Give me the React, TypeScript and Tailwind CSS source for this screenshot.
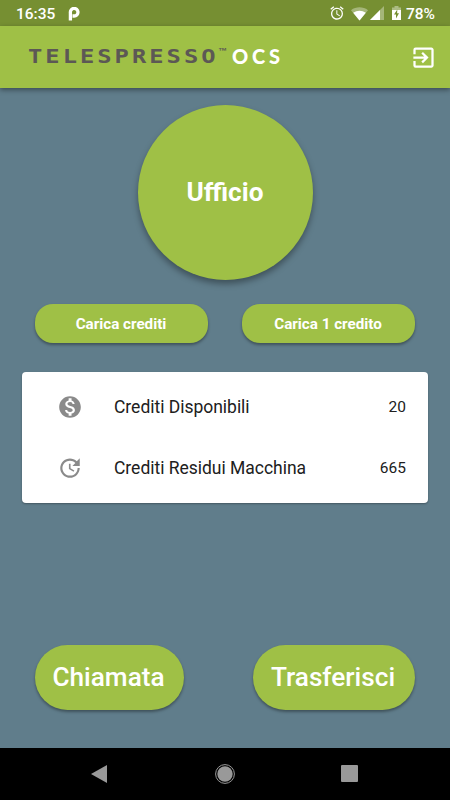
import type { ReactNode } from "react";
import { MdAlarm, MdExitToApp, MdMonetizationOn, MdUpdate } from "react-icons/md";

function StatusBar() {
  return (
    <div className="flex h-[26px] shrink-0 items-center bg-[#768f32] pl-4 pr-[15px] text-[15.5px] font-medium text-white">
      <span className="mt-[3px] w-[39px] whitespace-nowrap leading-none">16:35</span>
      <svg className="ml-[13px] mt-px" width="12" height="14" viewBox="0 0 12 14">
        <path
          d="M2.4 13.5V5.8A3.8 3.8 0 1 1 6.2 9H4.5"
          fill="none"
          stroke="#fff"
          strokeWidth="3.3"
        />
      </svg>
      <div className="ml-auto flex items-center">
        <MdAlarm size={16} />
        <svg className="ml-[6px] mt-px" width="17" height="14" viewBox="0 0 17 14">
          <path d="M0 3.2C5 -.6 12 -.6 17 3.2L8.5 13.5Z" fill="#fff" opacity=".35" />
          <path d="M2.2 5.8C6 3 11 3 14.8 5.8L8.5 13.5Z" fill="#fff" />
        </svg>
        <svg className="ml-[2px]" width="14" height="14" viewBox="0 0 14 14">
          <path d="M0 14L14 0V14Z" fill="#fff" opacity=".35" />
          <path d="M0 14L10 4V14Z" fill="#fff" />
        </svg>
        <svg className="ml-[8px]" width="9" height="14" viewBox="0 0 9 14">
          <path d="M0 1.5H2.5V0H6.5V1.5H9V4H0Z" fill="#fff" opacity=".4" />
          <path d="M0 4H9V14H0Z" fill="#fff" />
          <path d="M5.3 3.5L2 8.5H4V12.5L7 7.3H5.1Z" fill="#768f32" />
        </svg>
        <span className="ml-[5px] mt-[3px] w-[29px] whitespace-nowrap leading-none">78%</span>
      </div>
    </div>
  );
}

function Header() {
  return (
    <header className="z-10 flex h-[62px] shrink-0 items-center justify-between bg-[#9fc046] pl-[28px] pr-[13px] text-white shadow-[0_2px_5px_rgba(0,0,0,0.4)]">
      <div className="-mt-[2px] flex items-center whitespace-nowrap leading-none">
        <div className="w-[190px]">
          <span className="flex w-[152px] origin-left scale-x-[1.25] font-['DejaVu_Sans_Mono',monospace] text-[19px] font-bold tracking-[2.42px] text-[#5c5855]">
            TELESPRESS<span className="tracking-normal">O</span>
          </span>
        </div>
        <span className="-mt-[9px] w-[14px] font-['Liberation_Sans',sans-serif] text-[9px] font-bold text-[#5c5855]">™</span>
        <span className="font-['Lato',sans-serif] text-[20px] font-black tracking-[3.8px]">OCS</span>
      </div>
      <MdExitToApp size={27} />
    </header>
  );
}

function CreditRow({ icon, label, value }: { icon: ReactNode; label: string; value: string }) {
  return (
    <div className="flex h-[61px] items-center pl-[35px] pr-[22px]">
      <span className="-mt-[2px] w-[57px] text-[#8a8a8a]">{icon}</span>
      <span className="grow text-[17.5px] tracking-[-0.02px] text-[#202020]">{label}</span>
      <span className="text-[15.5px] text-[#202020]">{value}</span>
    </div>
  );
}

export default function App() {
  return (
    <div className="flex h-[800px] w-[450px] flex-col overflow-hidden bg-[#607d8b] font-['Roboto',sans-serif]">
      <StatusBar />
      <Header />
      <main className="flex grow flex-col">
        <button className="mx-auto mt-[17px] size-[175px] rounded-full bg-[#9fc046] text-[26.2px] font-bold text-white shadow-[0_4px_6px_rgba(0,0,0,0.35)]">
          Ufficio
        </button>
        <div className="mx-[35px] mt-[24px] flex justify-between text-[15.2px] font-bold text-white">
          <button className="h-[39px] w-[173px] rounded-[18px] bg-[#9fc046] pr-px pt-[2px] shadow-[0_2px_3px_rgba(0,0,0,0.35)]">
            Carica crediti
          </button>
          <button className="h-[39px] w-[173px] rounded-[18px] bg-[#9fc046] pr-px pt-[2px] shadow-[0_2px_3px_rgba(0,0,0,0.35)]">
            Carica 1 credito
          </button>
        </div>
        <section className="mx-[22px] mt-[29px] h-[131px] rounded-[4px] bg-white pt-[5px] shadow-[0_1px_2px_rgba(0,0,0,0.3)]">
          <CreditRow icon={<MdMonetizationOn size={26} />} label="Crediti Disponibili" value="20" />
          <CreditRow icon={<MdUpdate size={26} />} label="Crediti Residui Macchina" value="665" />
        </section>
        <div className="mx-[35px] mb-[38px] mt-auto flex justify-between text-[26.2px] font-medium text-white">
          <button className="h-[65px] w-[149px] rounded-full bg-[#9fc046] pr-[2px] shadow-[0_2px_3px_rgba(0,0,0,0.35)]">
            Chiamata
          </button>
          <button className="h-[65px] w-[162px] rounded-full bg-[#9fc046] pr-[2px] shadow-[0_2px_3px_rgba(0,0,0,0.35)]">
            Trasferisci
          </button>
        </div>
      </main>
      <nav className="flex h-[52px] shrink-0 items-center justify-between bg-black pl-[91px] pr-[92px]">
        <svg width="16" height="18" viewBox="0 0 16 18">
          <path d="M16 0V18L0 9Z" fill="#999" />
        </svg>
        <svg className="ml-px" width="20" height="20" viewBox="0 0 20 20">
          <circle cx="10" cy="10" r="9.4" fill="none" stroke="#999" />
          <circle cx="10" cy="10" r="7.7" fill="#999" />
        </svg>
        <div className="-mt-px size-[17px] rounded-[1px] bg-[#999]" />
      </nav>
    </div>
  );
}
